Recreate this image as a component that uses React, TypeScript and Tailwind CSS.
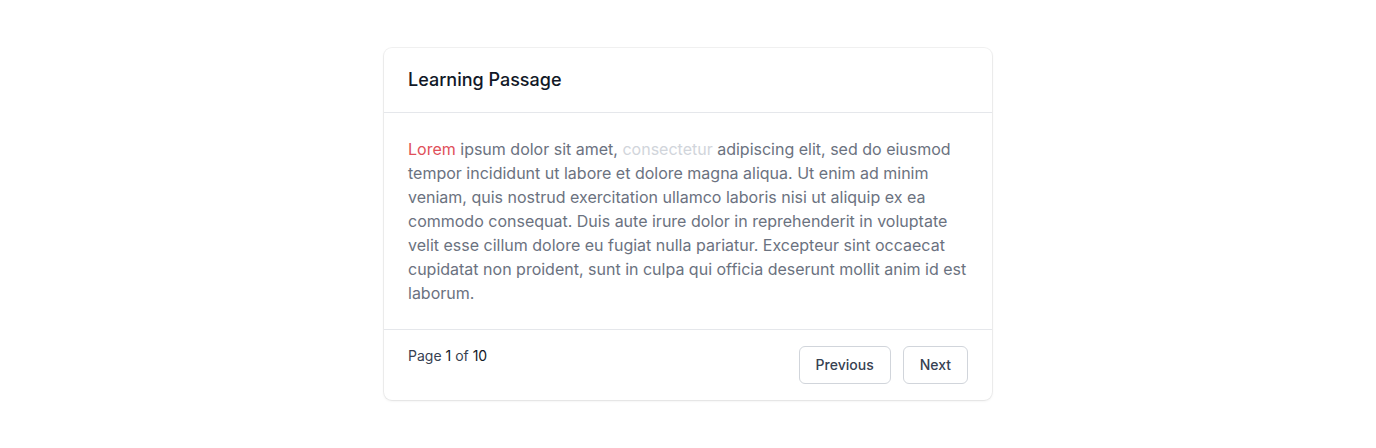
import React from 'react'

export default function App() {
  return (
    <div className="min-h-[448px] bg-white py-12 font-['Inter',sans-serif]">
      <div className="mx-auto w-[608px] overflow-hidden rounded-lg bg-white shadow-[0_0_0_1px_rgba(0,0,0,0.05),0_1px_3px_0_rgba(0,0,0,0.08)]">
        <div className="border-b border-[#e5e7eb] px-6 py-[18px]">
          <h2 className="text-lg leading-7 font-medium text-[#111827]">Learning Passage</h2>
        </div>
        <div className="border-b border-[#e5e7eb] p-6">
          <p className="text-base leading-6 text-[#6b7280]">
            <span className="text-[#e0505a]">Lorem</span> ipsum dolor sit amet,{' '}
            <span className="text-[#d1d5db]">consectetur</span> adipiscing elit, sed do eiusmod
            tempor incididunt ut labore et dolore magna aliqua. Ut enim ad minim veniam, quis
            nostrud exercitation ullamco laboris nisi ut aliquip ex ea commodo consequat. Duis
            aute irure dolor in reprehenderit in voluptate velit esse cillum dolore eu fugiat
            nulla pariatur. Excepteur sint occaecat cupidatat non proident, sunt in culpa qui
            officia deserunt mollit anim id est laborum.
          </p>
        </div>
        <div className="flex items-start justify-between px-6 pt-4 pb-4">
          <span className="text-sm leading-5 text-[#374151]">
            Page <span className="text-[#111827]">1</span> of{' '}
            <span className="text-[#111827]">10</span>
          </span>
          <div className="flex items-center gap-3">
            <button
              type="button"
              className="rounded-md border border-[#d1d5db] bg-white px-4 py-2 text-sm leading-5 font-medium text-[#374151]"
            >
              Previous
            </button>
            <button
              type="button"
              className="rounded-md border border-[#d1d5db] bg-white px-4 py-2 text-sm leading-5 font-medium text-[#374151]"
            >
              Next
            </button>
          </div>
        </div>
      </div>
    </div>
  )
}
